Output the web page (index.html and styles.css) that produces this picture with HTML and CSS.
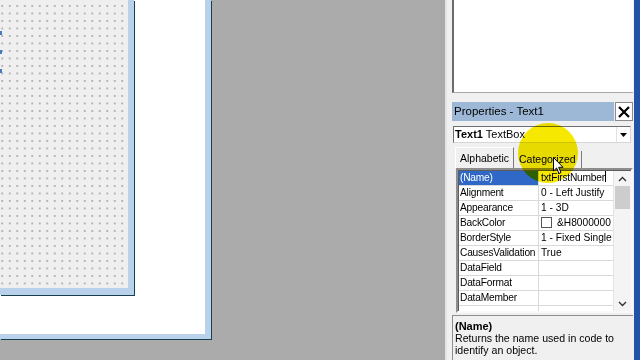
FILE: index.html
```html
<!DOCTYPE html>
<html lang="en">
<head>
    <meta charset="UTF-8">
    <title>Form Designer - Properties</title>
    <link rel="stylesheet" href="styles.css">
</head>
<body>
    <div class="screen">
        <div class="workspace">
            <div class="designer">
                <div class="form">
                    <span class="handle h1"></span>
                    <span class="handle h2"></span>
                    <span class="handle h3"></span>
                </div>
            </div>
        </div>

        <div class="panel">
            <div class="explorer"></div>

            <div class="titlebar">
                <div class="title">Properties - Text1</div>
                <div class="close">
                    <svg width="14" height="14" viewBox="0 0 14 14"><path d="M2 2 L12 12 M12 2 L2 12" stroke="#000" stroke-width="2.2"/></svg>
                </div>
            </div>

            <div class="combo">
                <span class="combo-text"><b>Text1</b> TextBox</span>
                <span class="combo-btn">
                    <svg width="7" height="4" viewBox="0 0 7 4"><path d="M0 0 H7 L3.5 4 Z" fill="#000"/></svg>
                </span>
            </div>

            <div class="tabs">
                <div class="tab active">Alphabetic</div>
                <div class="tab">Categorized</div>
            </div>

            <div class="grid">
                <div class="rows">
                    <div class="row">
                        <div class="name selected">(Name)</div>
                        <div class="value editing">txtFirstNumber<span class="caret"></span></div>
                    </div>
                    <div class="row"><div class="name">Alignment</div><div class="value">0 - Left Justify</div></div>
                    <div class="row"><div class="name">Appearance</div><div class="value">1 - 3D</div></div>
                    <div class="row"><div class="name">BackColor</div><div class="value"><span class="swatch"></span>&amp;H8000000</div></div>
                    <div class="row"><div class="name">BorderStyle</div><div class="value">1 - Fixed Single</div></div>
                    <div class="row"><div class="name">CausesValidation</div><div class="value">True</div></div>
                    <div class="row"><div class="name">DataField</div><div class="value"></div></div>
                    <div class="row"><div class="name">DataFormat</div><div class="value"></div></div>
                    <div class="row"><div class="name">DataMember</div><div class="value"></div></div>
                    <div class="row"><div class="name"></div><div class="value"></div></div>
                </div>
                <div class="scrollbar">
                    <div class="arrow">
                        <svg width="9" height="6" viewBox="0 0 9 6"><path d="M1 5 L4.5 1.5 L8 5" fill="none" stroke="#333" stroke-width="1.4"/></svg>
                    </div>
                    <div class="thumb"></div>
                    <div class="track"></div>
                    <div class="arrow">
                        <svg width="9" height="6" viewBox="0 0 9 6"><path d="M1 1 L4.5 4.5 L8 1" fill="none" stroke="#333" stroke-width="1.4"/></svg>
                    </div>
                </div>
            </div>

            <div class="desc">
                <div class="desc-title">(Name)</div>
                <div class="desc-text">Returns the name used in code to identify an object.</div>
            </div>
        </div>

        <div class="edge"></div>

        <div class="spotlight"></div>
        <svg class="pointer" width="12" height="18" viewBox="0 0 12 18">
            <path d="M0.5 0.5 L0.5 14 L3.6 11 L6 16.5 L8 15.6 L5.7 10.3 L10 10.3 Z" fill="#fff" stroke="#000" stroke-width="1"/>
        </svg>
    </div>
</body>
</html>
```

FILE: styles.css
```css
body {
    margin: 0;
    font-family: "Liberation Sans", Arial, sans-serif;
    font-size: 11px;
    color: #000;
}
.screen {
    position: relative;
    display: flex;
    width: 640px;
    height: 360px;
    overflow: hidden;
}

/* MDI area with the form designer */
.workspace {
    width: 445px;
    height: 360px;
    background-color: #ababab;
}
.designer {
    width: 205px;
    height: 334px;
    background-color: #fff;
    border-right: 6px solid #b9d1ea;
    border-bottom: 5px solid #b9d1ea;
    box-shadow: 1px 1px 0 #17414d;
}
.form {
    position: relative;
    width: 128px;
    height: 288px;
    background-color: #efefef;
    background-image: radial-gradient(circle, #959595 0.55px, transparent 0.9px);
    background-size: 7.5px 7.5px;
    background-position: -1.5px 2.2px;
    border-right: 6px solid #b9d1ea;
    border-bottom: 7px solid #b9d1ea;
    box-shadow: 1px 1px 0 #17414d;
}
.handle {
    position: absolute;
    left: 0;
    width: 2px;
    height: 4px;
    background-color: #4a78bd;
}
.h1 { top: 31px; }
.h2 { top: 50px; }
.h3 { top: 69px; }

/* Right side tool panel */
.panel {
    width: 187px;
    height: 360px;
    background-color: #f0f0f0;
    border-left: 2px solid #e4e4e4;
    display: flex;
    flex-direction: column;
}
.explorer {
    height: 92px;
    margin-left: 5px;
    margin-right: 1px;
    background-color: #fff;
    border-left: 2px solid #6b6b6b;
    border-bottom: 1px solid #a8a8a8;
}
.titlebar {
    display: flex;
    margin: 9px 1px 0 5px;
    height: 19px;
}
.title {
    flex: 1;
    background-color: #9db8d6;
    font-size: 11.5px;
    line-height: 19px;
    padding-left: 2px;
}
.close {
    width: 18px;
    margin-left: 1px;
    background-color: #fff;
    border: 1px solid #8a8a8a;
    box-sizing: border-box;
    display: flex;
    align-items: center;
    justify-content: center;
}
.combo {
    display: flex;
    height: 17px;
    margin: 5px 3px 0 6px;
    background-color: #fff;
    border-top: 1px solid #6f6f6f;
    border-left: 1px solid #6f6f6f;
    border-right: 1px solid #d6d6d6;
    border-bottom: 1px solid #d6d6d6;
    box-sizing: border-box;
}
.combo-text {
    flex: 1;
    line-height: 15px;
    padding-left: 1px;
}
.combo-btn {
    width: 13px;
    display: flex;
    align-items: center;
    justify-content: center;
    border-left: 1px solid #e2e2e2;
}
.tabs {
    display: flex;
    align-items: flex-end;
    height: 21px;
    margin: 4px 0 0 8px;
}
.tab {
    font-size: 10.5px;
    line-height: 17px;
    padding: 0 5px;
    border-right: 1px solid #7c7c7c;
}
.tab.active {
    line-height: 20px;
    padding: 0 6px 0 4px;
    border-left: 1px solid #fff;
    border-top: 1px solid #fff;
    width: 47px;
}

/* Property grid */
.grid {
    display: flex;
    height: 145px;
    margin: 0 1px 0 9px;
    border: 2px solid #8d8d8d;
    border-color: #8d8d8d #f8f8f8 #f8f8f8 #8d8d8d;
    box-shadow: inset 1px 1px 0 #5c5c5c;
    background-color: #fff;
    box-sizing: border-box;
    overflow: hidden;
    padding-top: 1px;
}
.rows {
    width: 155px;
    padding-left: 1px;
}
.row {
    display: flex;
    height: 15px;
    border-bottom: 1px solid #d9d9d9;
    box-sizing: border-box;
    font-size: 10.2px;
    line-height: 14px;
}
.name {
    width: 80px;
    box-sizing: border-box;
    padding-left: 1px;
    border-right: 1px solid #d9d9d9;
    white-space: nowrap;
    overflow: hidden;
    letter-spacing: -0.2px;
}
.name.selected {
    background-color: #2f68c6;
    color: #fff;
}
.value {
    flex: 1;
    padding-left: 2px;
    white-space: nowrap;
    overflow: hidden;
}
.value.editing {
    letter-spacing: -0.2px;
}
.caret {
    display: inline-block;
    width: 1px;
    height: 11px;
    background-color: #000;
    vertical-align: -1px;
}
.swatch {
    display: inline-block;
    width: 9px;
    height: 9px;
    border: 1px solid #555;
    background-color: #fff;
    vertical-align: -2px;
    margin-right: 5px;
}
.scrollbar {
    width: 17px;
    display: flex;
    flex-direction: column;
    background-color: #f4f4f4;
    border-left: 1px solid #e4e4e4;
}
.arrow {
    height: 15px;
    display: flex;
    align-items: center;
    justify-content: center;
}
.thumb {
    height: 23px;
    margin: 0 1px;
    background-color: #cdcdcd;
}
.track {
    flex: 1;
}

/* Description pane */
.desc {
    flex: 1;
    margin: 2px 1px 0 5px;
    border-top: 1px solid #8d8d8d;
    border-left: 1px solid #8d8d8d;
    padding: 3px 0 0 2px;
}
.desc-title {
    font-weight: bold;
    font-size: 11px;
    line-height: 14px;
}
.desc-text {
    width: 172px;
    font-size: 10.6px;
    line-height: 11.5px;
}

.edge {
    width: 6px;
    background-color: #2452a6;
}

/* Recording spotlight and mouse pointer */
.spotlight {
    position: absolute;
    left: 518px;
    top: 123px;
    width: 60px;
    height: 60px;
    border-radius: 50%;
    background-color: #f6e800;
    mix-blend-mode: multiply;
    filter: blur(0.6px);
}
.pointer {
    position: absolute;
    left: 553px;
    top: 157px;
}
```
